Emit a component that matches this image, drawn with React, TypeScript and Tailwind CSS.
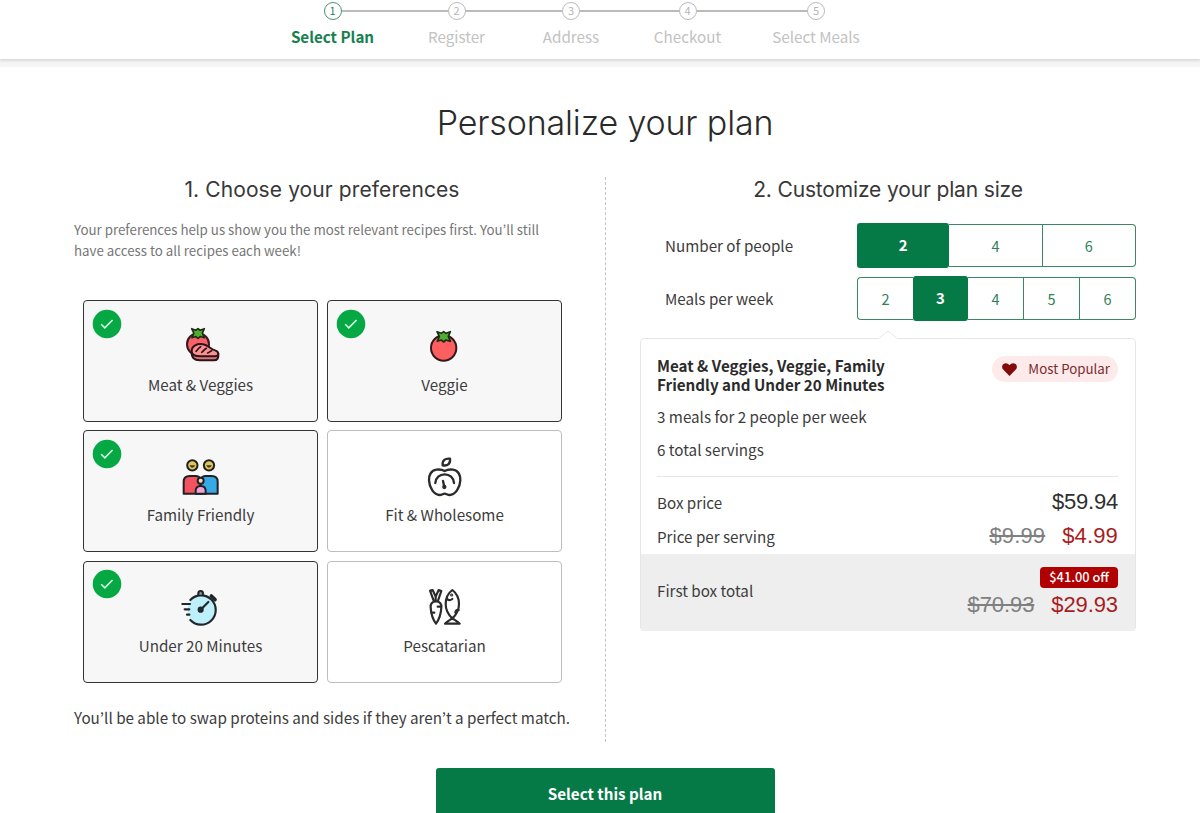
import type { ReactNode } from "react";
import clsx from "clsx";

const steps = [
  { label: "Select Plan", width: "w-[137px]" },
  { label: "Register", width: "w-[111px]" },
  { label: "Address", width: "w-[118px]" },
  { label: "Checkout", width: "w-[115px]" },
  { label: "Select Meals", width: "w-[142px]" },
];

const Stem = () => (
  <path
    d="M1 1 L14 6 L21 1 L28 6 L41 1 L35 15 L41 30 L28 26 L21 32 L14 26 L2 30 L8 15 Z"
    fill="#4fae32"
    stroke="#1d2b16"
    strokeWidth="5"
    strokeLinejoin="round"
  />
);

const MeatIcon = () => (
  <>
    <circle cx="51" cy="58" r="33" fill="#f9606a" stroke="#3a1a1c" strokeWidth="6" />
    <g transform="translate(31 10) scale(0.95)">
      <Stem />
    </g>
    <path
      d="M32 80 C31 98 40 106 56 106 L98 106 C110 106 113 99 112 86 Z"
      fill="#d9777b"
      stroke="#2b1416"
      strokeWidth="6"
      strokeLinejoin="round"
    />
    <path
      d="M32 79 C32 62 49 55 66 58 C82 61 88 72 104 77 C115 81 114 94 102 94 L58 94 C43 94 32 91 32 79 Z"
      fill="#fb8f92"
      stroke="#2b1416"
      strokeWidth="6"
      strokeLinejoin="round"
    />
    <path
      d="M45 79 C51 74 53 68 59 65 M62 82 C68 78 70 73 76 70 M80 84 C85 82 87 79 92 77"
      fill="none"
      stroke="#2b1416"
      strokeWidth="5"
      strokeLinecap="round"
    />
  </>
);

const VeggieIcon = () => (
  <>
    <circle cx="56" cy="69" r="38" fill="#fd5f60" stroke="#33191b" strokeWidth="6" />
    <g transform="translate(35 19)">
      <Stem />
    </g>
  </>
);

const FamilyIcon = () => (
  <g stroke="#1f2224" strokeWidth="6" strokeLinejoin="round">
    <circle cx="34" cy="31" r="15.5" fill="#e3c65a" />
    <circle cx="84" cy="31" r="15.5" fill="#e3c65a" />
    <path d="M27 32 q7 10 14 0 Z M77 32 q7 10 14 0 Z" fill="#5b4a1c" strokeWidth="2" />
    <path d="M8 116 V80 Q8 63 26 63 H44 Q55 63 59 72 V116 Z" fill="#f3525f" />
    <path d="M59 116 V72 Q63 63 74 63 H92 Q110 63 110 80 V116 Z" fill="#36a9e6" />
    <path d="M44 116 V108 Q44 93 59 93 Q74 93 74 108 V116 Z" fill="#f3a3d3" />
    <circle cx="59" cy="77" r="9" fill="#f6ddc0" />
  </g>
);

const StopwatchIcon = () => (
  <g fill="none" stroke="#20282c" strokeWidth="6.5" strokeLinecap="round">
    <circle cx="61" cy="72" r="41" fill="#bdf0fb" stroke="none" />
    <path d="M28 42 A44 44 0 1 1 28 102" />
    <path d="M52 25 Q51 15 59 15 Q67 15 66 25" fill="#8d9a9f" />
    <path d="M91 30 L102 41" strokeWidth="11" />
    <circle cx="59" cy="71" r="6" fill="#20282c" />
    <path d="M62 68 L82 48 M4 54 H27 M11 70 H25 M18 86 H25" />
  </g>
);

const AppleIcon = () => (
  <g fill="none" stroke="#2b2b2b" strokeWidth="7" strokeLinecap="round" strokeLinejoin="round">
    <path d="M53 31 C51 16 61 9 75 11 C77 25 69 34 53 31 Z" />
    <path d="M59 48 C50 43 41 43 34 44 C19 46 11 60 12 76 C13 98 27 120 44 120 C51 120 54 116 59 116 C64 116 67 120 74 120 C91 120 105 98 106 76 C107 60 99 46 84 44 C77 43 68 43 59 48 Z" />
    <path d="M31 84 C32 68 44 58 59 58 C74 58 86 68 87 84" />
    <path d="M54 78 L58 96" />
    <circle cx="58" cy="96" r="3" fill="#2b2b2b" />
  </g>
);

const PescatarianIcon = () => (
  <g fill="none" stroke="#2b2b2b" strokeWidth="6.5" strokeLinecap="round" strokeLinejoin="round">
    <path d="M26 44 L15 14 L23 12 L32 32 L41 12 L49 15 L39 44 M32 32 V44" />
    <path d="M33 46 C22 46 16 53 17 64 C18 84 25 102 33 113 C41 102 48 84 49 64 C50 53 44 46 33 46 Z" />
    <path d="M48 62 H38 M19 80 H28" />
    <path d="M82 12 C94 21 102 37 102 54 C102 72 93 87 82 97 C71 87 62 72 62 54 C62 37 70 21 82 12 Z" />
    <path d="M82 97 C75 102 66 106 60 113 H104 C98 106 89 102 82 97 Z" />
    <path d="M66 39 Q73 46 82 39 M101 72 Q92 70 91 80" />
    <circle cx="80" cy="27" r="1.5" fill="#2b2b2b" />
  </g>
);

const preferences = [
  { label: "Meat & Veggies", icon: <MeatIcon />, selected: true },
  { label: "Veggie", icon: <VeggieIcon />, selected: true },
  { label: "Family Friendly", icon: <FamilyIcon />, selected: true },
  { label: "Fit & Wholesome", icon: <AppleIcon />, selected: false },
  { label: "Under 20 Minutes", icon: <StopwatchIcon />, selected: true },
  { label: "Pescatarian", icon: <PescatarianIcon />, selected: false },
];

const PreferenceCard = ({ label, icon, selected }: { label: string; icon: ReactNode; selected: boolean }) => (
  <button
    type="button"
    className={clsx(
      "relative flex h-[122px] flex-col items-center rounded-[4px] border pt-6",
      selected ? "border-[#333] bg-[#f7f7f7]" : "border-[#bdbdbd] bg-white",
    )}
  >
    {selected && (
      <svg className="absolute left-[7.5px] top-[7.5px]" width="30" height="30" viewBox="0 0 30 30" fill="none">
        <circle cx="15" cy="15" r="14.3" fill="#06a844" />
        <path d="M9.2 15.2 L12.8 18.8 L20.6 11" stroke="#d9fbe4" strokeWidth="1.6" />
      </svg>
    )}
    <svg width="40" height="40" viewBox="0 0 120 120" className="overflow-visible">
      {icon}
    </svg>
    <span className="mt-[7px] text-[15.2px] leading-6 text-[#3c3c3c]">{label}</span>
  </button>
);

const SizePicker = ({ label, options, value }: { label: string; options: number[]; value: number }) => (
  <div className="flex h-[43px] items-center justify-between pl-[25px]">
    <span className="pb-[2px] text-[15.2px] leading-6 text-[#3c3c3c]">{label}</span>
    <div className="flex h-[43px] w-[279px]">
      {options.map((n, i) => (
        <button
          key={n}
          type="button"
          className={clsx(
            "flex-1 text-[14.5px] leading-5",
            n === value
              ? "-my-px rounded-[3px] bg-[#067a46] pb-[2px] text-[15px] font-bold text-white"
              : "border-y border-r border-[#3b8763] bg-white text-[#2f7f58]",
            i === 0 && n !== value && "rounded-l-[4px] border-l",
            options[i + 1] === value && "border-r-0",
            i === options.length - 1 && "rounded-r-[4px]",
          )}
        >
          {n}
        </button>
      ))}
    </div>
  </div>
);

const App = () => {
  return (
    <div className="h-[813px] overflow-hidden bg-white font-['Noto_Sans_CJK_KR',sans-serif] text-[#3c3c3c]">
      <header className="flex h-[59px] pl-[264px] pt-[2px] shadow-[0_2px_2px_#dadada,0_8px_0_#f5f5f5]">
        {steps.map((step, i) => (
          <div key={step.label} className={clsx("flex flex-col items-center", step.width)}>
            <div className="flex w-full items-center">
              <span className={clsx("h-[2px] flex-1", i > 0 && "bg-[#bababa]")} />
              <span
                className={clsx(
                  "flex size-[18px] items-center justify-center rounded-full border pb-px text-[11px] leading-none",
                  i === 0 ? "border-[#4a9270] text-[#2f7f58]" : "border-[#bababa] text-[#b5b5b5]",
                )}
              >
                {i + 1}
              </span>
              <span className={clsx("h-[2px] flex-1", i < steps.length - 1 && "bg-[#bababa]")} />
            </div>
            <span
              className={clsx(
                "mt-1 whitespace-nowrap text-[15.2px] leading-6",
                i === 0 ? "font-bold text-[#17804e]" : "text-[#c2c2c2]",
              )}
            >
              {step.label}
            </span>
          </div>
        ))}
      </header>

      <main className="pl-[74px] pr-16">
        <h1 className="mt-[42px] text-center font-[Inter,sans-serif] text-[34px] font-light leading-[44px] tracking-[-0.15px] text-[#2a2a2a]">
          Personalize your plan
        </h1>

        <div className="mt-8 flex">
          <section className="w-[531px] shrink-0">
            <h2 className="w-[496px] text-center font-[Inter,sans-serif] text-[21px] leading-[26px] tracking-[0.1px] text-[#383838]">
              1. Choose your preferences
            </h2>
            <p className="mt-4 whitespace-nowrap text-[13.3px] leading-[21px] text-[#767676]">
              Your preferences help us show you the most relevant recipes first. You’ll still
              <br />
              have access to all recipes each week!
            </p>
            <div className="ml-[9px] mt-[39px] grid w-[479px] grid-cols-2 gap-x-[9px] gap-y-[8.4px]">
              {preferences.map((p) => (
                <PreferenceCard key={p.label} {...p} />
              ))}
            </div>
            <p className="mt-[22px] whitespace-nowrap text-[15.22px] leading-6">
              You’ll be able to swap proteins and sides if they aren’t a perfect match.
            </p>
          </section>

          <section className="flex h-[565px] flex-1 flex-col border-l border-dashed border-[#c4c4c4] pl-[34px]">
            <h2 className="text-center font-[Inter,sans-serif] text-[21px] leading-[26px] tracking-[-0.15px] text-[#383838]">
              2. Customize your plan size
            </h2>
            <div className="mt-[21px] flex flex-col gap-[10px]">
              <SizePicker label="Number of people" options={[2, 4, 6]} value={2} />
              <SizePicker label="Meals per week" options={[2, 3, 4, 5, 6]} value={3} />
            </div>

            <div className="relative mt-[18px] h-[293px] rounded-[4px] border border-[#e6e6e6]">
              <svg className="absolute -top-[9px] left-[237px]" width="20" height="10" viewBox="0 0 20 10">
                <path d="M0 9 L10 1 L20 9 V10 H0 Z" fill="#fff" />
                <path d="M0 9 L10 1 L20 9" fill="none" stroke="#e9e9e9" />
              </svg>
              <div className="pl-4 pr-[17px]">
                <div className="flex h-[65px] items-start justify-between pt-[17px]">
                  <p className="whitespace-nowrap text-[15.2px] font-bold leading-[19px] text-[#2b2b2b]">
                    Meat & Veggies, Veggie, Family
                    <br />
                    Friendly and Under 20 Minutes
                  </p>
                  <span className="flex h-[26px] items-center whitespace-nowrap rounded-full bg-[#fdeaea] pb-px pl-[10px] pr-2 text-[13.3px] text-[#7c2a2e]">
                    <svg width="15" height="13" viewBox="0 0 15 13" className="mr-[11px] mt-px">
                      <path
                        d="M7.5 13 L1.2 6.6 C-0.4 4.9 -0.1 2.2 1.5 1 C3.3 -0.4 6 0 7.5 2.2 C9 0 11.7 -0.4 13.5 1 C15.1 2.2 15.4 4.9 13.8 6.6 Z"
                        fill="#840a0a"
                      />
                    </svg>
                    Most Popular
                  </span>
                </div>
                <p className="text-[15.2px] leading-6">3 meals for 2 people per week</p>
                <p className="mt-[9px] text-[15.2px] leading-6">6 total servings</p>
                <div className="mt-[15px] border-t border-[#e6e6e6]" />
                <div className="mt-3 flex h-[26px] items-center justify-between">
                  <span className="text-[15.2px] leading-6">Box price</span>
                  <span className="font-['Liberation_Sans',sans-serif] text-[22px] leading-6 tracking-[-0.2px] text-[#2f2f2f]">
                    $59.94
                  </span>
                </div>
                <div className="mt-2 flex h-[26px] items-center justify-between">
                  <span className="text-[15.2px] leading-6">Price per serving</span>
                  <span className="flex gap-[17px] font-['Liberation_Sans',sans-serif] text-[22px] leading-6 tracking-[0.15px]">
                    <s className="text-[#808080]">$9.99</s>
                    <span className="text-[#a71d22]">$4.99</span>
                  </span>
                </div>
              </div>
              <div className="mt-[5px] flex h-[77px] items-center justify-between bg-[#eee] pl-4 pr-[17px]">
                <span className="pb-[4px] text-[15.2px]">First box total</span>
                <div className="flex flex-col items-end">
                  <span className="flex h-[21px] items-center rounded-[4px] bg-[#b00000] px-[9px] pb-px text-[12.8px] font-medium text-white">
                    $41.00 off
                  </span>
                  <span className="mt-1 flex gap-[17px] font-['Liberation_Sans',sans-serif] text-[22px] leading-[26px] tracking-[-0.1px]">
                    <s className="text-[#808080]">$70.93</s>
                    <span className="text-[#a71d22]">$29.93</span>
                  </span>
                </div>
              </div>
            </div>
          </section>
        </div>

        <button
          type="button"
          className="mx-auto mt-[26px] block h-[53px] w-[339px] rounded-[3px] bg-[#067a46] pb-[2px] text-[15.2px] font-bold text-white"
        >
          Select this plan
        </button>
      </main>
    </div>
  );
};

export default App;
